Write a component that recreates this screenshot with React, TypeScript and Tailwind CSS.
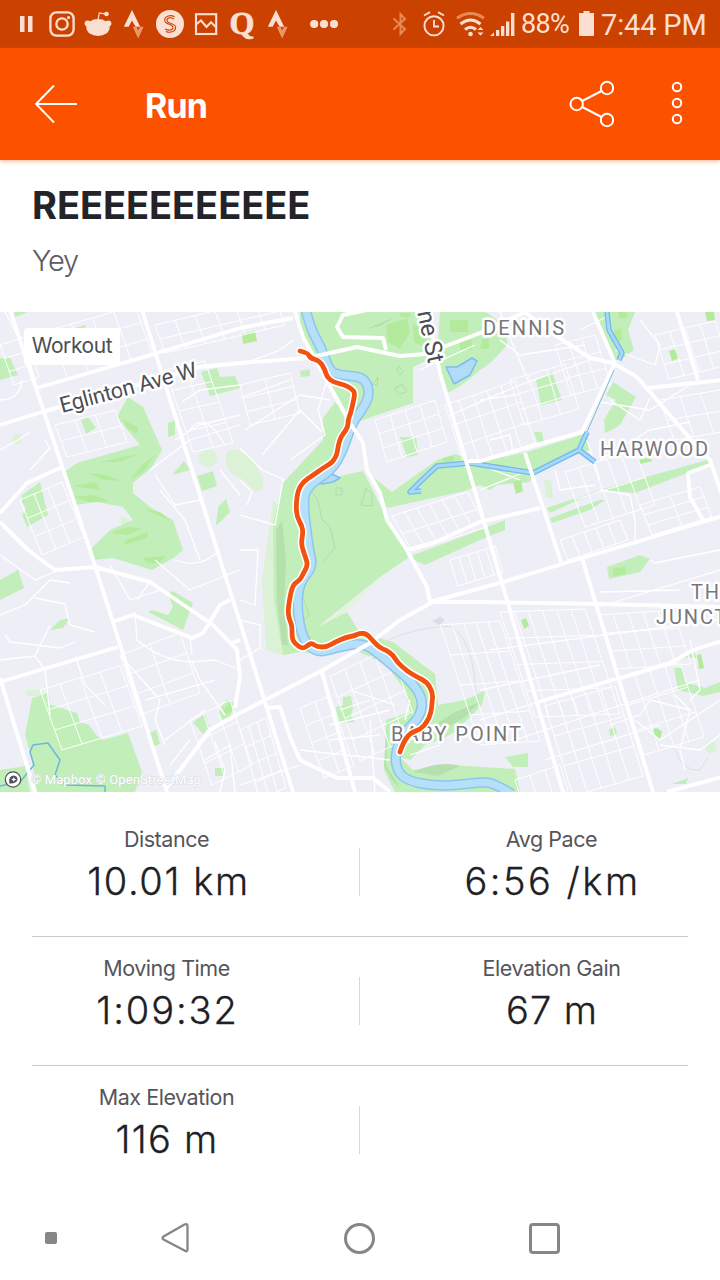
import type { ReactNode } from "react";

const uiFont = "font-['Inter','Liberation_Sans',sans-serif]";

function Slot({ children, className = "w-9" }: { children: ReactNode; className?: string }) {
  return <span className={`flex h-9 shrink-0 items-center justify-center ${className}`}>{children}</span>;
}

function StravaMark() {
  return (
    <svg viewBox="0 0 36 36" className="h-9 w-9">
      <path d="M16 4 L24.2 20.7 H19.6 L16 14.4 L12.6 20.7 H7.800 Z" fill="#fbdfd2" />
      <path d="M16.700 20.700 H20.6 L22.200 24.500 L24 20.700 H27.600 L22.200 32.500 Z" fill="#ec9768" />
    </svg>
  );
}

function StatusBar() {
  return (
    <div className="flex h-12 shrink-0 items-center bg-[#cb4200] pl-2 pr-[14px] text-[#fbdfd2]">
      <Slot>
        <svg viewBox="0 0 36 36" className="h-9 w-9" fill="currentColor">
          <path d="M12 10h4.500v16h-4.500zM20 10h4.500v16h-4.500z" />
        </svg>
      </Slot>
      <Slot>
        <svg viewBox="0 0 36 36" className="h-9 w-9" fill="none" stroke="currentColor" strokeWidth="2.3">
          <rect x="6.4" y="6.4" width="23.2" height="23.2" rx="6" />
          <circle cx="18" cy="18" r="5.7" />
          <circle cx="24.6" cy="11.5" r="1.6" fill="currentColor" stroke="none" />
        </svg>
      </Slot>
      <Slot>
        <svg viewBox="0 0 36 36" className="h-9 w-9" fill="currentColor">
          <ellipse cx="18" cy="21.5" rx="11.6" ry="8.5" />
          <circle cx="7.6" cy="17.6" r="3" />
          <circle cx="28.4" cy="17.6" r="3" />
          <circle cx="26.5" cy="8" r="2.3" />
          <path d="M18 14l1.3-7 7 1.2" fill="none" stroke="currentColor" strokeWidth="1.2" />
        </svg>
      </Slot>
      <Slot><StravaMark /></Slot>
      <Slot>
        <svg viewBox="0 0 36 36" className="h-9 w-9">
          <circle cx="18" cy="18" r="14" fill="#fbdfd2" />
          <path d="M22.5 10.8C19 8.6 12.7 9.6 12.7 14.2C12.7 19 21 17.5 21 21.5C21 24.3 16.8 25 13 23M13.8 25.4C17.5 27 23.6 26.2 23.6 21.6C23.6 17 15 18.2 15 14.2C15 11.5 19 11 22 13" fill="none" stroke="#cb4200" strokeWidth="1.1" />
        </svg>
      </Slot>
      <Slot>
        <svg viewBox="0 0 36 36" className="h-9 w-9" fill="none" stroke="currentColor" strokeWidth="2.1">
          <rect x="8" y="8.2" width="20.2" height="19.8" />
          <path d="M8 18.5l5-4 5.5 6.5 4.5-4.7 5 5" />
        </svg>
      </Slot>
      <Slot>
        <span className="-mt-0.5 font-['Liberation_Serif',serif] text-[32px] font-bold leading-9 [-webkit-text-stroke:0.8px_#fbdfd2]">Q</span>
      </Slot>
      <Slot><StravaMark /></Slot>
      <Slot className="ml-[10px] w-9">
        <svg viewBox="0 0 36 36" className="h-9 w-9" fill="currentColor">
          <circle cx="8.2" cy="18" r="4.1" /><circle cx="18" cy="18" r="4.1" /><circle cx="28" cy="18" r="4.1" />
        </svg>
      </Slot>
      <div className="ml-auto flex items-center">
        <svg viewBox="0 0 20 28" className="h-7 w-5" fill="none" stroke="#e8895a" strokeWidth="2">
          <path d="M3.5 8.5l11.5 10.5-4.5 5V4l4.5 5L3.5 19.5" />
        </svg>
        <svg viewBox="0 0 26 28" className="ml-[11px] h-7 w-[26px]" fill="none" stroke="currentColor" strokeWidth="1.9">
          <circle cx="13" cy="15.8" r="9.6" />
          <path d="M13 10v6.5h5M3 5.5l6-3.3M23 5.5l-6-3.3" />
        </svg>
        <svg viewBox="0 0 30 28" className="ml-[8px] h-7 w-[30px]" fill="none" strokeWidth="3">
          <path d="M2 8.2Q15.500-1.200 29 8.200" stroke="#e8895a" />
          <path d="M5.5 14Q15.500 6 25.500 14M10 19.500Q15.500 15 21 19.500" stroke="currentColor" />
          <circle cx="15.500" cy="24" r="2.300" fill="currentColor" />
          <path d="M22.500 20l3-3 3 3zM22.500 22.500l3 3 3-3z" fill="currentColor" />
        </svg>
        <svg viewBox="0 0 26 28" className="ml-[5px] h-7 w-[26px]" fill="currentColor">
          <path d="M0 26L4 22.500v3.500zM6 20h3.300v6H6zM11 16h3.300V26h-3.300zM16 11.500h3.300v14.500h-3.300zM21 3h3.400V26h-3.400z" />
        </svg>
        <span className="ml-[5px] w-[50px] whitespace-nowrap font-['Roboto',sans-serif] text-[27px] leading-9 tracking-[-0.7px]">88%</span>
        <svg viewBox="0 0 15 28" className="ml-2 h-7 w-[15px]" fill="currentColor">
          <path d="M4.500 1h6v2H15v22q0 1-1 1H1q-1 0-1-1V3h4.500z" />
        </svg>
        <span className="ml-[7px] w-[105px] whitespace-nowrap pt-0.5 font-['Roboto',sans-serif] text-[29px] leading-9 tracking-[-0.150px]">7:44 PM</span>
      </div>
    </div>
  );
}

function AppBar() {
  return (
    <header className="relative flex h-28 shrink-0 items-center bg-[#fc5200] pl-[34px] pr-[23px] text-white shadow-[0_1px_5px_rgba(252,82,0,0.45)]">
      <svg viewBox="0 0 44 40" className="h-10 w-11" fill="none" stroke="currentColor" strokeWidth="1.900">
        <path d="M43 20H2M20 1.500L2 20l18 18.500" />
      </svg>
      <h1 className={`ml-[67px] pt-1 text-[34px] font-bold leading-10 tracking-[-0.9px] ${uiFont}`}>Run</h1>
      <svg viewBox="0 0 46 48" className="ml-auto h-12 w-[46px]" fill="none" stroke="currentColor" strokeWidth="2">
        <circle cx="7.700" cy="24" r="6.200" /><circle cx="38" cy="8" r="6.200" /><circle cx="38" cy="40" r="6.200" />
        <path d="M13.200 21L32.500 11M13.200 27L32.500 37" />
      </svg>
      <svg viewBox="0 0 40 48" className="ml-[42px] h-12 w-10" fill="none" stroke="currentColor" strokeWidth="2">
        <circle cx="20" cy="7" r="4.200" /><circle cx="20" cy="23" r="4.200" /><circle cx="20" cy="39" r="4.200" />
      </svg>
    </header>
  );
}

type Block = [number, number, number, number, number, number, number, number];

/* Street block: origin, first side, second side, then the line count along each side. */
const blocks: Block[] = [
  [565, 472, 70, -22, 20, 55, 5, 2],
  [500, 612, 85, -3, 35, 105, 6, 4],
  [440, 625, 60, -4, 40, 120, 5, 4],
  [545, 706, 70, -20, 28, 90, 5, 3],
  [620, 680, 60, -18, 24, 75, 4, 3],
  [598, 615, 75, -5, 18, 54, 5, 3],
  [330, 676, 60, -28, 30, 85, 4, 4],
  [240, 730, 26, -12, 20, 70, 3, 4],
  [300, 708, 30, -12, 24, 70, 2, 4],
  [120, 655, 60, -22, 20, 60, 2, 3],
  [40, 690, 80, -24, 22, 60, 4, 3],
  [655, 335, 60, -14, 14, 44, 4, 3],
  [510, 380, 55, -16, 14, 45, 3, 3],
  [445, 405, 70, -24, 20, 62, 5, 3],
  [375, 420, 60, -20, 12, 42, 4, 3],
  [392, 516, 75, -24, 20, 35, 6, 2],
  [50, 330, 85, -24, 18, 50, 4, 3],
  [155, 325, 120, -28, 10, 28, 6, 2],
  [165, 370, 40, -9, 28, 82, 2, 4],
  [55, 425, 60, -15, 12, 32, 3, 2],
  [0, 345, 25, -8, 14, 40, 1, 3],
  [20, 500, 42, -18, 22, 55, 3, 3],
  [515, 780, 45, -15, 8, 25, 3, 1],
  [560, 540, 60, -20, 8, 20, 5, 1],
  [555, 345, 40, -10, 16, 50, 3, 3],
  [660, 400, 60, -10, 14, 40, 3, 2],
  [640, 505, 60, -18, 12, 30, 2, 3],
  [450, 560, 45, -14, 8, 26, 5, 1],
  [240, 385, 50, -12, 10, 40, 2, 3],
  [190, 720, 40, -20, 22, 65, 3, 3],
];

function blockPath([x, y, ux, uy, vx, vy, a, b]: Block) {
  let d = "";
  for (let i = 0; i <= a; i++) {
    const t = i / a;
    d += `M${x + ux * t} ${y + uy * t}l${vx} ${vy}`;
  }
  for (let j = 0; j <= b; j++) {
    const t = j / b;
    d += `M${x + vx * t} ${y + vy * t}l${ux} ${uy}`;
  }
  return d;
}

/* Turns a polyline ("x y x y ...") into a path that is rounded at every inner point. */
function smooth(points: string) {
  const n = points.split(" ").map(Number);
  const end = n.length - 2;
  let d = `M${n[0]} ${n[1]}`;
  for (let i = 2; i < end; i += 2) {
    const last = i + 2 === end;
    const x = last ? n[i + 2] : (n[i] + n[i + 2]) / 2;
    const y = last ? n[i + 3] : (n[i + 1] + n[i + 3]) / 2;
    d += `Q${n[i]} ${n[i + 1]} ${x} ${y}`;
  }
  return d;
}

const minorRoads =
  "M0 450L18 440L30 432M30 470L50 448L45 440M5 312L25 350M25 345L37 388M0 400Q20 400 22 380M150 470L190 440L240 425M155 475L175 505L200 500M175 440L200 425L240 415M182 402L200 390L240 385M190 430Q200 415 215 430L225 445M160 490L185 520L200 560M220 470L240 495M240 448L262 470L285 480M240 365L280 350L293 340M240 398L290 380M245 430L300 395L330 400M262 455L300 410L322 432M240 515L275 525L283 480M290 460L325 435L318 410L330 370M240 480L252 492L247 505M0 555L35 580L60 570M35 598L65 604L70 625L95 632M0 615L25 605L50 580L70 583M5 635L10 642L60 648L75 642M50 625L35 656L45 670L50 715M0 660L35 656M75 655L85 685L105 705M120 655L160 700M135 612L137 640Q160 660 190 662L215 660L235 668M150 582L137 600M190 638L192 655M192 662L200 680L225 715M145 700L215 680M160 700L155 720L165 745M165 740L205 710M190 740L170 765M110 565L130 600L160 590M175 560Q200 570 220 550M155 560L190 590L240 570M240 600L255 605L258 550L240 550M240 620L260 625L260 648L240 660M205 760L230 745L235 792M215 742L225 770L220 792M240 785L300 765M450 415L520 385L590 360M500 340L520 355L585 345M500 312L515 350L530 385M580 330L610 315M610 400L640 420L650 398M600 402L650 410L690 385M600 460L650 430L690 422M600 490L630 495L635 520L635 540M555 470L560 490L595 485M490 440L510 435L513 452M480 400L515 395M640 320L660 345L655 365L615 350M420 370L475 345M480 465L520 480M587 440L600 480M480 490L530 470M600 592L680 590M595 608L720 570M650 560L655 563L720 550M490 650L720 620M480 690L600 665M480 720L545 700M515 740L590 715L700 680M545 760L660 725M610 725L640 715L650 700L690 710M635 720L660 740L720 700M675 695L690 710L680 750L685 770M690 700L700 690L690 640M660 745L700 750L720 735M410 755L440 745M370 720L375 792M330 725L390 710M330 740L380 735M300 750L390 760M340 710L370 700M350 690L395 705M410 700L405 720";

const mainRoads =
  "M10 310L90 550L167 792M142 310L217 550L240 622L293 792M37 388L157 353L240 328L293 318M0 425L42 412L60 407L200 367L240 363L307 358L357 347L400 356L425 354L480 333L525 312L552 333L590 358L613 363L637 377L680 427L710 460L722 495M427 310L440 373L480 508L563 792M295 312L303 337L350 423L363 443L367 470L380 493L387 520L407 550L427 587L430 602M593 312L615 363L582 432L480 461L467 461M525 453L557 550L561 562M582 558L653 792M430 602L503 582L582 558L613 549L722 516M722 607L600 604L480 602L433 602L400 620L370 643L323 670L240 713L210 730L165 790M0 682L118 647M0 678L35 792M0 522L28 550L55 570L95 567L150 582L213 625L237 650L240 677L235 708M0 513L27 483L62 467M112 622L133 615L192 638L203 633L220 605L230 600M232 643L240 640M538 702L670 663L693 650L722 641M407 550L433 543L480 522L540 508M648 388L722 380M677 312L698 380M710 465L688 473L690 497L703 520M322 672L355 792M267 708L280 707L290 737L300 760L337 778L373 778L390 792M667 792L722 777M386 350L383 338L343 337L337 327L343 315L367 310";

const parks = [
  "M128 397L143 407L162 450L152 467L133 483L133 493L150 507L173 520L183 550L175 557L152 570L113 558L93 560L92 548L110 530L133 520L123 507L97 502L75 505L64 472L77 463L140 445L117 417Z",
  "M300 310H427L438 355L413 367L413 403L357 422L345 455L325 482L335 477L363 471L373 490L387 520L405 550L408 558L380 577L320 625L347 612L360 633L330 655L300 652L283 655L274 600L273 523L283 483L323 440L323 418L335 402L350 418L300 335Z",
  "M373 477L392 492L437 460L455 454L480 462L527 452L587 433L590 450L570 457L533 473L530 482L497 485L490 490L480 485L465 491L387 508L380 493Z",
  "M408 557L480 530L505 520L505 530L480 540L425 565Z",
  "M547 508L600 490L707 460L710 465L690 472L635 493L600 490L550 513Z",
  "M550 518L600 500L605 500L590 510L552 523Z",
  "M440 310H482Q510 325 507 345Q490 365 480 370Q460 388 447 393L437 360Z",
  "M593 312H635L628 330L634 350L620 360L613 360Z",
  "M613 382L636 397L620 425L612 430L605 433L604 420L616 400L606 395Z",
  "M536 380L552 372L562 400L541 405Z",
  "M201 372L217 368L220 377L235 376L240 388L210 396Z",
  "M81 420L88 417L96 428L86 434Z",
  "M22 495L40 482L48 515L27 527L22 515L26 509L22 502Z",
  "M0 358L10 358L18 375L0 380Z M14 312H28L15 317ZM75 328L85 325L86 332Z M168 423L175 420V435L168 437Z",
  "M172 475L184 461L190 470ZM197 476L213 471L217 486L202 491ZM216 525L218 507L226 499L230 512L219 523Z",
  "M0 580L18 570L24 588L0 600ZM50 630L60 620L70 618L63 628Z",
  "M148 612L152 610L168 615L173 607L168 594L173 591L193 603L183 630Z",
  "M32 699L25 735L31 756L37 792H135L142 772L128 733L103 740L96 735L89 725L80 722L77 713Z",
  "M0 770L25 766L30 792H0ZM32 698L48 693L50 702L34 708ZM218 712L227 699L234 703L231 716L222 720Z M193 722L205 714L209 727L203 734ZM148 734L156 730L160 744L152 747ZM215 768H225V776H215Z",
  "M336 707L343 705L343 697L351 696L353 708L351 715L355 722L338 723Z",
  "M400 437L416 437L418 455L407 457Z M300 371L310 369L310 376L301 377Z M534 432L542 432L544 443L538 444Z",
  "M607 567L640 555L650 559L640 572L609 579ZM674 668L683 668L685 682L705 688L720 682V692L703 696L678 690ZM675 657L693 651L697 658Z",
  "M609 729L615 727L617 734L610 736ZM653 729L658 728L662 736L654 739ZM505 757L528 753L528 767L513 767ZM672 784L688 778L686 784Z",
  "M360 632L393 642L435 674L438 705L465 700L485 691L482 705L455 732L440 740L425 745L410 760L400 757L413 770L450 765L515 769L520 792H395L384 770L386 720L410 712L405 690L385 664L355 650Z",
];

const river = smooth(
  "306 311 311 330 321 347 329 370 338 375 365 377 370 395 362 410 352 423 343 450 332 470 307 486 303 503 309 550 313 567 299 583 297 610 303 640 317 653 335 648 363 642 383 657 413 683 423 700 420 717 400 737 394 762 403 780 440 787 480 782 494 783 512 794",
);

const creek = "M607 312L609 330L622 353L619 360M587 432L579 450L595 462M579 450L533 473L470 463L437 466L422 480L410 492L421 491";

const route = smooth(
  "300 351 308 353 310 358 320 361 325 370 327 377 333 382 345 385 352 389 355 393 353 403 351 412 348 420 348 427 343 434 340 439 338 447 337 454 334 460 330 464 323 468 312 476 304 481 298 490 296 505 297 517 302 526 303 533 301 544 305 556 308 565 303 574 300 580 295 583 292 588 290 597 288 610 289 619 292 625 292 638 295 644 303 649 308 645 312 643 317 647 327 647 335 642 347 637 354 636 360 633 367 634 373 641 380 648 386 650 393 655 397 662 407 671 417 677 427 682 433 693 432 703 431 713 427 722 421 729 410 733 403 743 400 752",
);

function RouteMap() {
  return (
    <svg viewBox="0 312 720 480" className="block h-[480px] w-[720px]" fill="none" strokeLinejoin="round">
      <rect y="312" width="720" height="480" fill="#eeeef7" />
      <g fill="#dcf2d6">
        <path d="M273 500L262 580L266 650L285 656L290 520Z" />
        <circle cx="208" cy="458" r="9" /><path d="M226 455Q228 448 238 450Q256 458 263 480Q265 492 255 492Q245 480 230 472Q224 465 226 455Z" />
        <circle cx="17" cy="439" r="5" /><circle cx="711" cy="747" r="6" /><path d="M544 480h7l2 18h-7zM120 515l10 5-8 8zM26 690h15v6H26zM470 700l12-10 2 12z" />
      </g>
      {parks.map((d) => <path key={d} d={d} fill="#c2efb9" />)}
      <path d="M276 530L282 520L286 560L284 610L288 645L282 645L277 600ZM388 725L386 765L400 788L392 780L384 766ZM413 772Q440 760 460 766L438 776ZM430 728L455 712L480 702L464 718L438 732ZM366 329L395 317L380 326Z" fill="#b5dfad" />
      <g fill="#b3ea9b">
        <path d="M123 420L138 427L137 434L127 428ZM100 462L142 453L118 462ZM88 473L107 475L120 481L104 480ZM72 486L96 482L100 490ZM74 497L92 495L110 501L90 502ZM130 480L142 465L155 455L143 472ZM145 509L160 512L170 521ZM110 533L128 527L142 528L128 535ZM123 545L147 538L148 532L127 540ZM143 558L166 556L158 564L146 562Z" />
        <path d="M386 325L407 318L410 332L400 349L388 342ZM413 324L425 330L427 348L414 342ZM450 320h18v12h-18zM460 340h12v10h-12zM482 339h7v10h-9zM400 313h10v4h-10zM242 334L255 331L257 341L243 344ZM443 458l10-2 1 8-9 2zM614 330l7-2 1 12-6 2zM618 312h9v6h-8zM705 312h9l1 8-8 1zM669 351l7-2 3 9-7 3zM513 482l8-2 2 11-7 3zM638 460l13-3 1 4-12 3zM521 620l5-2 3 8-5 3zM613 568l12-1 1 7-13 2zM697 655l4-1 3 14-5 1zM652 735l3-7 7 3-2 8zM223 711l8-9 1 9-5 3z" />
      </g>
      <path d="M319 627L350 602L382 577L347 611Z" fill="#e4f3e0" />
      <g stroke="#b4d9af" strokeWidth="1">
        <path d="M310 490L318 500L322 520L330 527L335 548L322 563M303 598L309 615L302 622M361 505L366 488L372 494L372 506ZM336 488h6v7h-6zM373 384l5-7-1 8zM394 389l8-5 5 8-8 2zM397 370l2-4 4 5-3 4z" />
        <path d="M363 655Q400 628 450 626Q475 640 476 700M675 750Q683 772 700 770L708 757" stroke="#dedee9" />
      </g>
      <path d="M432 621L440 617L445 620L440 625Z" fill="#dcdce3" />
      <path d={minorRoads} stroke="#fff" strokeWidth="1.300" />
      {blocks.map((b) => <path key={b.join()} d={blockPath(b)} stroke="#fff" strokeWidth="1" />)}
      <path d="M318 482Q325 474 332 474L340 478L333 482L322 484ZM446 367L457 367L472 358L477 361L470 375L454 384Z" fill="#b1dcf8" stroke="#7fbdee" strokeWidth="1.500" />
      <path d={river} stroke="#8fc4ee" strokeWidth="10.500" />
      <path d={river} stroke="#b6e0fa" strokeWidth="7.500" />
      <path d={creek} stroke="#79b8ee" strokeWidth="5.500" />
      <path d={creek} stroke="#a3daf8" strokeWidth="2.800" />
      <path d="M0 786L20 782L34 765L30 752L33 745L48 743L60 760L55 775L65 785L105 786V792" stroke="#6cb8dc" strokeWidth="1.500" />
      <path d={mainRoads} stroke="#fff" strokeWidth="3.900" />
      <path d="M614 370L587 432" stroke="#7db9dc" strokeWidth="1" />
      <g className="font-['Roboto','Liberation_Sans',sans-serif]" paintOrder="stroke" stroke="#fff" strokeWidth="5" fill="#77777c" fontSize="20">
        <text x="483" y="335" textLength="81">DENNIS</text>
        <text x="600" y="456" textLength="108">HARWOOD</text>
        <text x="691" y="599" letterSpacing="1.900">THE</text>
        <text x="656" y="624" letterSpacing="1.900">JUNCTION</text>
        <text x="391" y="741" textLength="130">BABY POINT</text>
        <text transform="translate(62 413) rotate(-15)" fill="#4d4d55" fontSize="22" textLength="141">Eglinton Ave W</text>
        <text transform="translate(412 287) rotate(78)" fill="#4d4d55" fontSize="24" textLength="79">Jane St</text>
      </g>
      <path d={route} stroke="#fff" strokeWidth="8" strokeLinecap="round" />
      <path d={route} stroke="#f25110" strokeWidth="4.800" strokeLinecap="round" />
      <circle cx="13" cy="779.500" r="7.700" fill="#fff" stroke="#50505a" strokeWidth="1.200" />
      <path d="M9.300 783.500Q8.200 776 13.500 775.500Q17.700 776 17.500 779.500Q16.500 784 9.300 783.500Z" fill="#50505a" />
      <path d="M13.800 777l.8 1.800 1.800.7-1.800.8-.8 1.800-.8-1.800-1.800-.8 1.800-.7z" fill="#fff" />
      <text x="31" y="784" textLength="170" fontSize="13" fill="#fff" stroke="#ccd4d6" strokeWidth="0.800" paintOrder="stroke" className="font-['Roboto',sans-serif]">© Mapbox © OpenStreetMap</text>
    </svg>
  );
}

function Stat({ label, value, spacing }: { label: string; value: string; spacing: string }) {
  return (
    <div className="flex flex-1 flex-col items-center">
      <span className="text-[21.500px] leading-7 tracking-[-0.45px] text-[#55555a]">{label}</span>
      <span className={`mt-[5px] whitespace-nowrap text-[38px] font-light leading-[46px] text-[#202024] [-webkit-text-stroke:0.3px_#202024] ${spacing}`}>{value}</span>
    </div>
  );
}

function StatRow({ children, last = false }: { children: ReactNode; last?: boolean }) {
  return <div className={`mx-8 flex h-[129px] items-start ${last ? "" : "border-b border-[#cacaca]"}`}>{children}</div>;
}

function Divider() {
  return <span className="mt-[40px] h-12 w-px shrink-0 bg-[#d8d8d8]" />;
}

export default function App() {
  return (
    <div className={`flex h-[1280px] w-[720px] flex-col overflow-hidden bg-white ${uiFont}`}>
      <StatusBar />
      <AppBar />
      <section className="h-[152px] shrink-0 px-8 pt-[22px]">
        <h2 className="text-[38px] font-bold leading-[46px] tracking-[-0.050px] text-[#242428]">REEEEEEEEEEE</h2>
        <p className="mt-[12px] text-[29px] font-light leading-[42px] tracking-[-1.200px] text-[#5c5c60]">Yey</p>
      </section>
      <section className="relative h-[480px] shrink-0">
        <RouteMap />
        <span className="absolute left-6 top-4 flex h-[37px] w-24 items-center justify-center rounded-[4px] bg-white pb-0.5 text-[21px] tracking-[-0.4px] text-[#4d4d52]">Workout</span>
      </section>
      <section className="flex shrink-0 flex-col pt-4">
        <StatRow>
          <div className="flex w-[327px] pt-[17px]"><div className="flex w-[269px]"><Stat label="Distance" value="10.01 km" spacing="pl-1 tracking-[1.600px]" /></div></div>
          <Divider />
          <div className="flex flex-1 pl-[55px] pt-[17px]"><Stat label="Avg Pace" value="6:56 /km" spacing="pl-0.5 tracking-[2.500px]" /></div>
        </StatRow>
        <StatRow>
          <div className="flex w-[327px] pt-[17px]"><div className="flex w-[269px]"><Stat label="Moving Time" value="1:09:32" spacing="pl-0.5 tracking-[1.900px]" /></div></div>
          <Divider />
          <div className="flex flex-1 pl-[55px] pt-[17px]"><Stat label="Elevation Gain" value="67 m" spacing="pl-px tracking-[1px]" /></div>
        </StatRow>
        <StatRow last>
          <div className="flex w-[327px] pt-[17px]"><div className="flex w-[269px]"><Stat label="Max Elevation" value="116 m" spacing="pl-px tracking-[1.300px]" /></div></div>
          <Divider />
        </StatRow>
      </section>
      <nav className="mt-auto flex h-[84px] shrink-0 items-center pl-[45px]">
        <span className="h-3 w-3 rounded-[2px] bg-[#868686]" />
        <svg viewBox="0 0 30 34" className="ml-[103px] h-[34px] w-[30px]" fill="none" stroke="#868686" strokeWidth="2.300" strokeLinejoin="round">
          <path d="M27.500 5.500v23q0 3-3 1L3.500 18.500q-2-1.500 0-3L24.500 3.500q3-1.500 3 2Z" />
        </svg>
        <span className="ml-[154px] h-[31px] w-[31px] rounded-full border-[3px] border-[#868686]" />
        <span className="ml-[154px] h-[31px] w-[31px] rounded-[4px] border-[3px] border-[#868686]" />
      </nav>
    </div>
  );
}
